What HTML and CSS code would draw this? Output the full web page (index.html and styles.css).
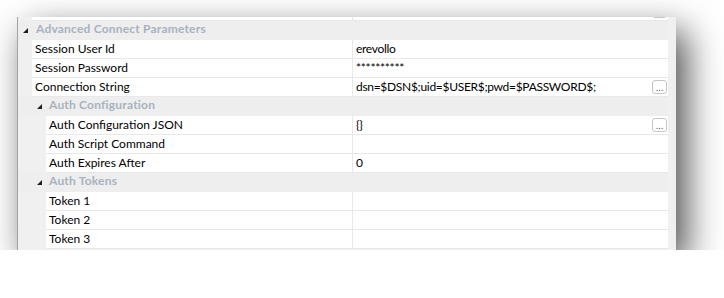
FILE: index.html
```html
<!DOCTYPE html>
<html lang="en">
<head>
    <meta charset="UTF-8">
    <meta name="viewport" content="width=device-width, initial-scale=1.0">
    <title>Connection properties</title>
    <link rel="stylesheet" href="styles.css">
</head>
<body>
    <div class="panel">
        <!-- previous row, only its bottom edge is visible -->
        <div class="row clipped">
            <div class="indent"></div>
            <div class="label"></div>
            <div class="value"><span class="text"></span><span class="dots"></span></div>
        </div>

        <div class="row category">
            <div class="indent"><span class="expander"></span></div>
            <div class="cat-name">Advanced Connect Parameters</div>
        </div>
        <div class="row">
            <div class="indent"></div>
            <div class="label">Session User Id</div>
            <div class="value"><span class="text">erevollo</span></div>
        </div>
        <div class="row">
            <div class="indent"></div>
            <div class="label">Session Password</div>
            <div class="value"><span class="text">**********</span></div>
        </div>
        <div class="row">
            <div class="indent"></div>
            <div class="label">Connection String</div>
            <div class="value"><span class="text">dsn=$DSN$;uid=$USER$;pwd=$PASSWORD$;</span><span class="dots">...</span></div>
        </div>

        <div class="row category">
            <div class="indent"></div>
            <div class="indent"><span class="expander"></span></div>
            <div class="cat-name">Auth Configuration</div>
        </div>
        <div class="row">
            <div class="indent wide"></div>
            <div class="label">Auth Configuration JSON</div>
            <div class="value"><span class="text">{}</span><span class="dots">...</span></div>
        </div>
        <div class="row">
            <div class="indent wide"></div>
            <div class="label">Auth Script Command</div>
            <div class="value"><span class="text"></span></div>
        </div>
        <div class="row">
            <div class="indent wide"></div>
            <div class="label">Auth Expires After</div>
            <div class="value"><span class="text">0</span></div>
        </div>

        <div class="row category">
            <div class="indent"></div>
            <div class="indent"><span class="expander"></span></div>
            <div class="cat-name">Auth Tokens</div>
        </div>
        <div class="row">
            <div class="indent wide"></div>
            <div class="label">Token 1</div>
            <div class="value"><span class="text"></span></div>
        </div>
        <div class="row">
            <div class="indent wide"></div>
            <div class="label">Token 2</div>
            <div class="value"><span class="text"></span></div>
        </div>
        <div class="row">
            <div class="indent wide"></div>
            <div class="label">Token 3</div>
            <div class="value"><span class="text"></span></div>
        </div>
    </div>
</body>
</html>
```

FILE: styles.css
```css
body {
    margin: 0;
    background: #ffffff;
    font-family: Lato, "Noto Sans", sans-serif;
    font-size: 12px;
    color: #000000;
}
.panel {
    margin: 17px 0 0 17px;
    width: 659px;
    box-sizing: border-box;
    border-left: 1px solid #a3a3a3;
    padding-right: 8px;
    padding-bottom: 1px;
    background: #f0f0f0;
    overflow: hidden;
    box-shadow: 10px 14px 34px rgba(0, 0, 0, 0.7);
}
.row {
    display: flex;
    height: 19px;
}
.row.clipped {
    margin-top: -15px;
}
.indent {
    width: 14px;
    flex: none;
    position: relative;
}
.indent.wide {
    width: 28px;
}
.label {
    flex: 1;
    background: #ffffff;
    border-bottom: 1px solid #e8e8e8;
    padding-left: 3px;
    line-height: 18px;
    white-space: nowrap;
}
.value {
    width: 316px;
    flex: none;
    box-sizing: border-box;
    display: flex;
    background: #ffffff;
    border-left: 1px solid #e8e8e8;
    border-bottom: 1px solid #e8e8e8;
}
.value .text {
    flex: 1;
    padding-left: 3px;
    line-height: 18px;
    letter-spacing: -0.3px;
    white-space: nowrap;
}
.dots {
    width: 15px;
    height: 14px;
    box-sizing: border-box;
    margin: 2px 1px 0 0;
    border: 1px solid #c6c6c6;
    border-radius: 3px;
    background: #ffffff;
    font-family: "DejaVu Sans", sans-serif;
    font-size: 8px;
    line-height: 15px;
    color: #333333;
    text-align: center;
}
.category {
    background: #eeeeee;
}
.cat-name {
    flex: 1;
    padding-left: 4px;
    line-height: 16px;
    padding-bottom: 3px;
    font-weight: bold;
    letter-spacing: 0.2px;
    color: #a9b2bf;
    white-space: nowrap;
}
.category .indent + .indent + .cat-name {
    padding-left: 3px;
}
.expander {
    position: absolute;
    left: 5px;
    top: 7px;
    width: 0;
    height: 0;
    border-left: 5px solid transparent;
    border-bottom: 5px solid #1e1e1e;
}
```
